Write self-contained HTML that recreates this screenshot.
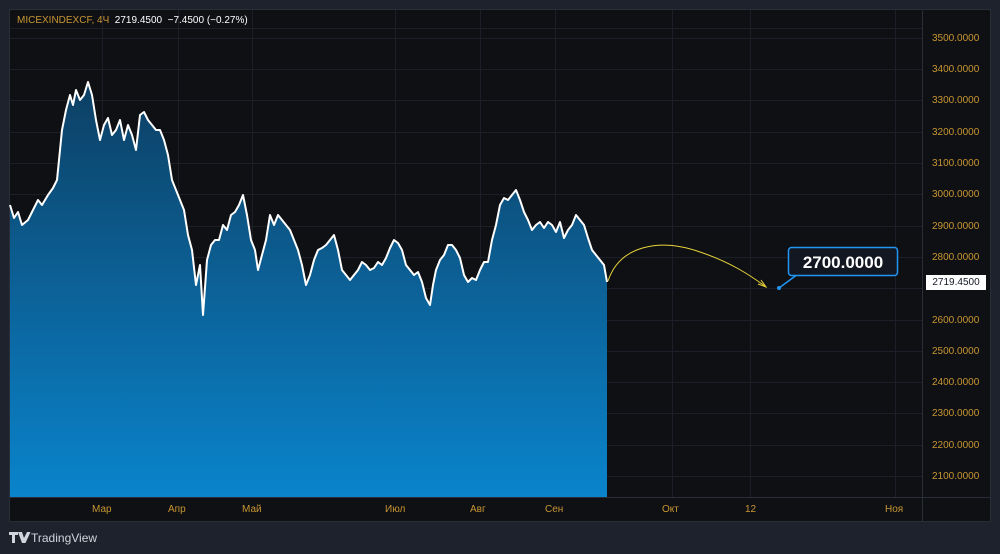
<!DOCTYPE html>
<html><head><meta charset="utf-8"><style>
html,body{margin:0;padding:0;background:#1e222d;width:1000px;height:554px;overflow:hidden;font-family:"Liberation Sans",sans-serif}
#p{position:absolute;left:9px;top:9px;width:982px;height:513px;background:#0f1014;border:1px solid #2a2e39;box-sizing:border-box}
.l{position:absolute;font-size:10px;color:#c89632}
</style></head><body>
<div id="p"></div>
<svg width="1000" height="554" style="position:absolute;left:0;top:0">
<defs><linearGradient id="g" x1="0" y1="0" x2="0" y2="1"><stop offset="0" stop-color="#0d3f63"/><stop offset="1" stop-color="#0a84cc"/></linearGradient></defs>
<g stroke="#1c1f27" stroke-width="1">
<line x1="102.5" y1="10" x2="102.5" y2="497"/><line x1="178.5" y1="10" x2="178.5" y2="497"/><line x1="252.5" y1="10" x2="252.5" y2="497"/><line x1="395.5" y1="10" x2="395.5" y2="497"/><line x1="480.5" y1="10" x2="480.5" y2="497"/><line x1="555.5" y1="10" x2="555.5" y2="497"/><line x1="672.5" y1="10" x2="672.5" y2="497"/><line x1="750.5" y1="10" x2="750.5" y2="497"/><line x1="895.5" y1="10" x2="895.5" y2="497"/>
<line x1="10" y1="38.5" x2="922" y2="38.5"/><line x1="10" y1="69.5" x2="922" y2="69.5"/><line x1="10" y1="100.5" x2="922" y2="100.5"/><line x1="10" y1="132.5" x2="922" y2="132.5"/><line x1="10" y1="163.5" x2="922" y2="163.5"/><line x1="10" y1="194.5" x2="922" y2="194.5"/><line x1="10" y1="226.5" x2="922" y2="226.5"/><line x1="10" y1="257.5" x2="922" y2="257.5"/><line x1="10" y1="288.5" x2="922" y2="288.5"/><line x1="10" y1="320.5" x2="922" y2="320.5"/><line x1="10" y1="351.5" x2="922" y2="351.5"/><line x1="10" y1="382.5" x2="922" y2="382.5"/><line x1="10" y1="413.5" x2="922" y2="413.5"/><line x1="10" y1="445.5" x2="922" y2="445.5"/><line x1="10" y1="476.5" x2="922" y2="476.5"/>
<line x1="10" y1="28.5" x2="922" y2="28.5"/>
</g>
<line x1="922.5" y1="10" x2="922.5" y2="521" stroke="#2a2e39"/>
<line x1="10" y1="497.5" x2="990" y2="497.5" stroke="#2a2e39"/>
<path fill="url(#g)" d="M10,497 L10,205 L14,218 L18,212 L22,225 L28,220 L33,210 L38,200 L42,205 L48,195 L53,188 L57,180 L60,150 L62,130 L66,110 L70,95 L73,105 L76,90 L80,100 L84,95 L88,82 L92,95 L96,120 L100,140 L104,125 L108,118 L112,135 L116,130 L120,120 L124,140 L128,125 L132,135 L136,150 L140,115 L144,112 L148,120 L152,125 L156,130 L160,130 L164,140 L168,155 L172,180 L176,190 L180,200 L184,210 L188,235 L192,250 L196,285 L200,265 L203,315 L207,260 L211,245 L215,240 L219,240 L223,225 L227,230 L231,215 L235,212 L239,205 L243,195 L247,215 L251,240 L255,250 L258,270 L262,255 L266,240 L270,215 L274,225 L278,215 L282,220 L286,225 L290,230 L294,240 L298,250 L302,265 L306,285 L310,275 L314,260 L318,250 L322,248 L326,245 L330,240 L334,235 L338,250 L342,270 L346,275 L350,280 L354,275 L358,270 L362,262 L366,265 L370,270 L374,268 L378,262 L382,265 L386,258 L390,248 L394,240 L398,243 L402,250 L406,265 L410,270 L414,275 L418,272 L422,282 L426,298 L430,305 L433,285 L436,270 L440,260 L444,255 L448,245 L452,245 L456,250 L460,258 L464,275 L468,282 L472,278 L476,280 L480,270 L484,262 L488,262 L492,240 L496,225 L500,205 L504,198 L508,200 L512,195 L516,190 L520,200 L524,212 L528,220 L532,230 L536,225 L540,222 L544,228 L548,222 L552,225 L556,232 L560,222 L564,238 L568,230 L572,225 L576,215 L580,220 L584,225 L588,238 L592,250 L596,255 L600,260 L604,265 L607,282 L607,497 Z"/>
<path fill="none" stroke="#fff" stroke-width="2" stroke-linejoin="round" d="M10,205 L14,218 L18,212 L22,225 L28,220 L33,210 L38,200 L42,205 L48,195 L53,188 L57,180 L60,150 L62,130 L66,110 L70,95 L73,105 L76,90 L80,100 L84,95 L88,82 L92,95 L96,120 L100,140 L104,125 L108,118 L112,135 L116,130 L120,120 L124,140 L128,125 L132,135 L136,150 L140,115 L144,112 L148,120 L152,125 L156,130 L160,130 L164,140 L168,155 L172,180 L176,190 L180,200 L184,210 L188,235 L192,250 L196,285 L200,265 L203,315 L207,260 L211,245 L215,240 L219,240 L223,225 L227,230 L231,215 L235,212 L239,205 L243,195 L247,215 L251,240 L255,250 L258,270 L262,255 L266,240 L270,215 L274,225 L278,215 L282,220 L286,225 L290,230 L294,240 L298,250 L302,265 L306,285 L310,275 L314,260 L318,250 L322,248 L326,245 L330,240 L334,235 L338,250 L342,270 L346,275 L350,280 L354,275 L358,270 L362,262 L366,265 L370,270 L374,268 L378,262 L382,265 L386,258 L390,248 L394,240 L398,243 L402,250 L406,265 L410,270 L414,275 L418,272 L422,282 L426,298 L430,305 L433,285 L436,270 L440,260 L444,255 L448,245 L452,245 L456,250 L460,258 L464,275 L468,282 L472,278 L476,280 L480,270 L484,262 L488,262 L492,240 L496,225 L500,205 L504,198 L508,200 L512,195 L516,190 L520,200 L524,212 L528,220 L532,230 L536,225 L540,222 L544,228 L548,222 L552,225 L556,232 L560,222 L564,238 L568,230 L572,225 L576,215 L580,220 L584,225 L588,238 L592,250 L596,255 L600,260 L604,265 L607,282"/>
<path fill="none" stroke="#e8d33a" stroke-width="1" d="M608,281 C620,245 660,238 700,252 C730,262 750,275 766,287"/>
<path fill="none" stroke="#e8d33a" stroke-width="1" d="M758,284 L766,287 L761,280"/>
<line x1="779" y1="288" x2="798" y2="274" stroke="#2196f3" stroke-width="1.5"/>
<circle cx="779" cy="288" r="2" fill="#2196f3"/>
<rect x="788.5" y="247.5" width="109" height="28" rx="3" fill="#131722" stroke="#2196f3" stroke-width="1.5"/>
<text x="843" y="268" fill="#fff" font-size="17" font-weight="bold" text-anchor="middle" font-family="Liberation Sans">2700.0000</text>
<path d="M9,532 h9 v3 h-3 v8 h-3 v-8 h-3z M18,532 h4 l2,6 l3,-6 h3.5 l-5,11 h-3.5z" fill="#d1d4dc"/>
</svg>
<div style="position:absolute;left:17px;top:15px;font-size:10px;color:#c89632">MICEXINDEXCF, 4Ч <span style="color:#fff">&nbsp;2719.4500&nbsp; −7.4500 (−0.27%)</span></div>
<div class="l" style="left:932px;top:33px">3500.0000</div>
<div class="l" style="left:932px;top:64px">3400.0000</div>
<div class="l" style="left:932px;top:95px">3300.0000</div>
<div class="l" style="left:932px;top:127px">3200.0000</div>
<div class="l" style="left:932px;top:158px">3100.0000</div>
<div class="l" style="left:932px;top:189px">3000.0000</div>
<div class="l" style="left:932px;top:221px">2900.0000</div>
<div class="l" style="left:932px;top:252px">2800.0000</div>
<div class="l" style="left:932px;top:315px">2600.0000</div>
<div class="l" style="left:932px;top:346px">2500.0000</div>
<div class="l" style="left:932px;top:377px">2400.0000</div>
<div class="l" style="left:932px;top:408px">2300.0000</div>
<div class="l" style="left:932px;top:440px">2200.0000</div>
<div class="l" style="left:932px;top:471px">2100.0000</div>
<div style="position:absolute;left:926px;top:275px;width:60px;height:15px;background:#fff;color:#131722;font-size:10px;line-height:15px;text-align:center">2719.4500</div>
<div class="l" style="left:92px;top:504px">Мар</div>
<div class="l" style="left:168px;top:504px">Апр</div>
<div class="l" style="left:242px;top:504px">Май</div>
<div class="l" style="left:385px;top:504px">Июл</div>
<div class="l" style="left:470px;top:504px">Авг</div>
<div class="l" style="left:545px;top:504px">Сен</div>
<div class="l" style="left:662px;top:504px">Окт</div>
<div class="l" style="left:745px;top:504px">12</div>
<div class="l" style="left:885px;top:504px">Ноя</div>
<div style="position:absolute;left:31px;top:531px;font-size:12px;color:#d1d4dc">TradingView</div>
</body></html>
